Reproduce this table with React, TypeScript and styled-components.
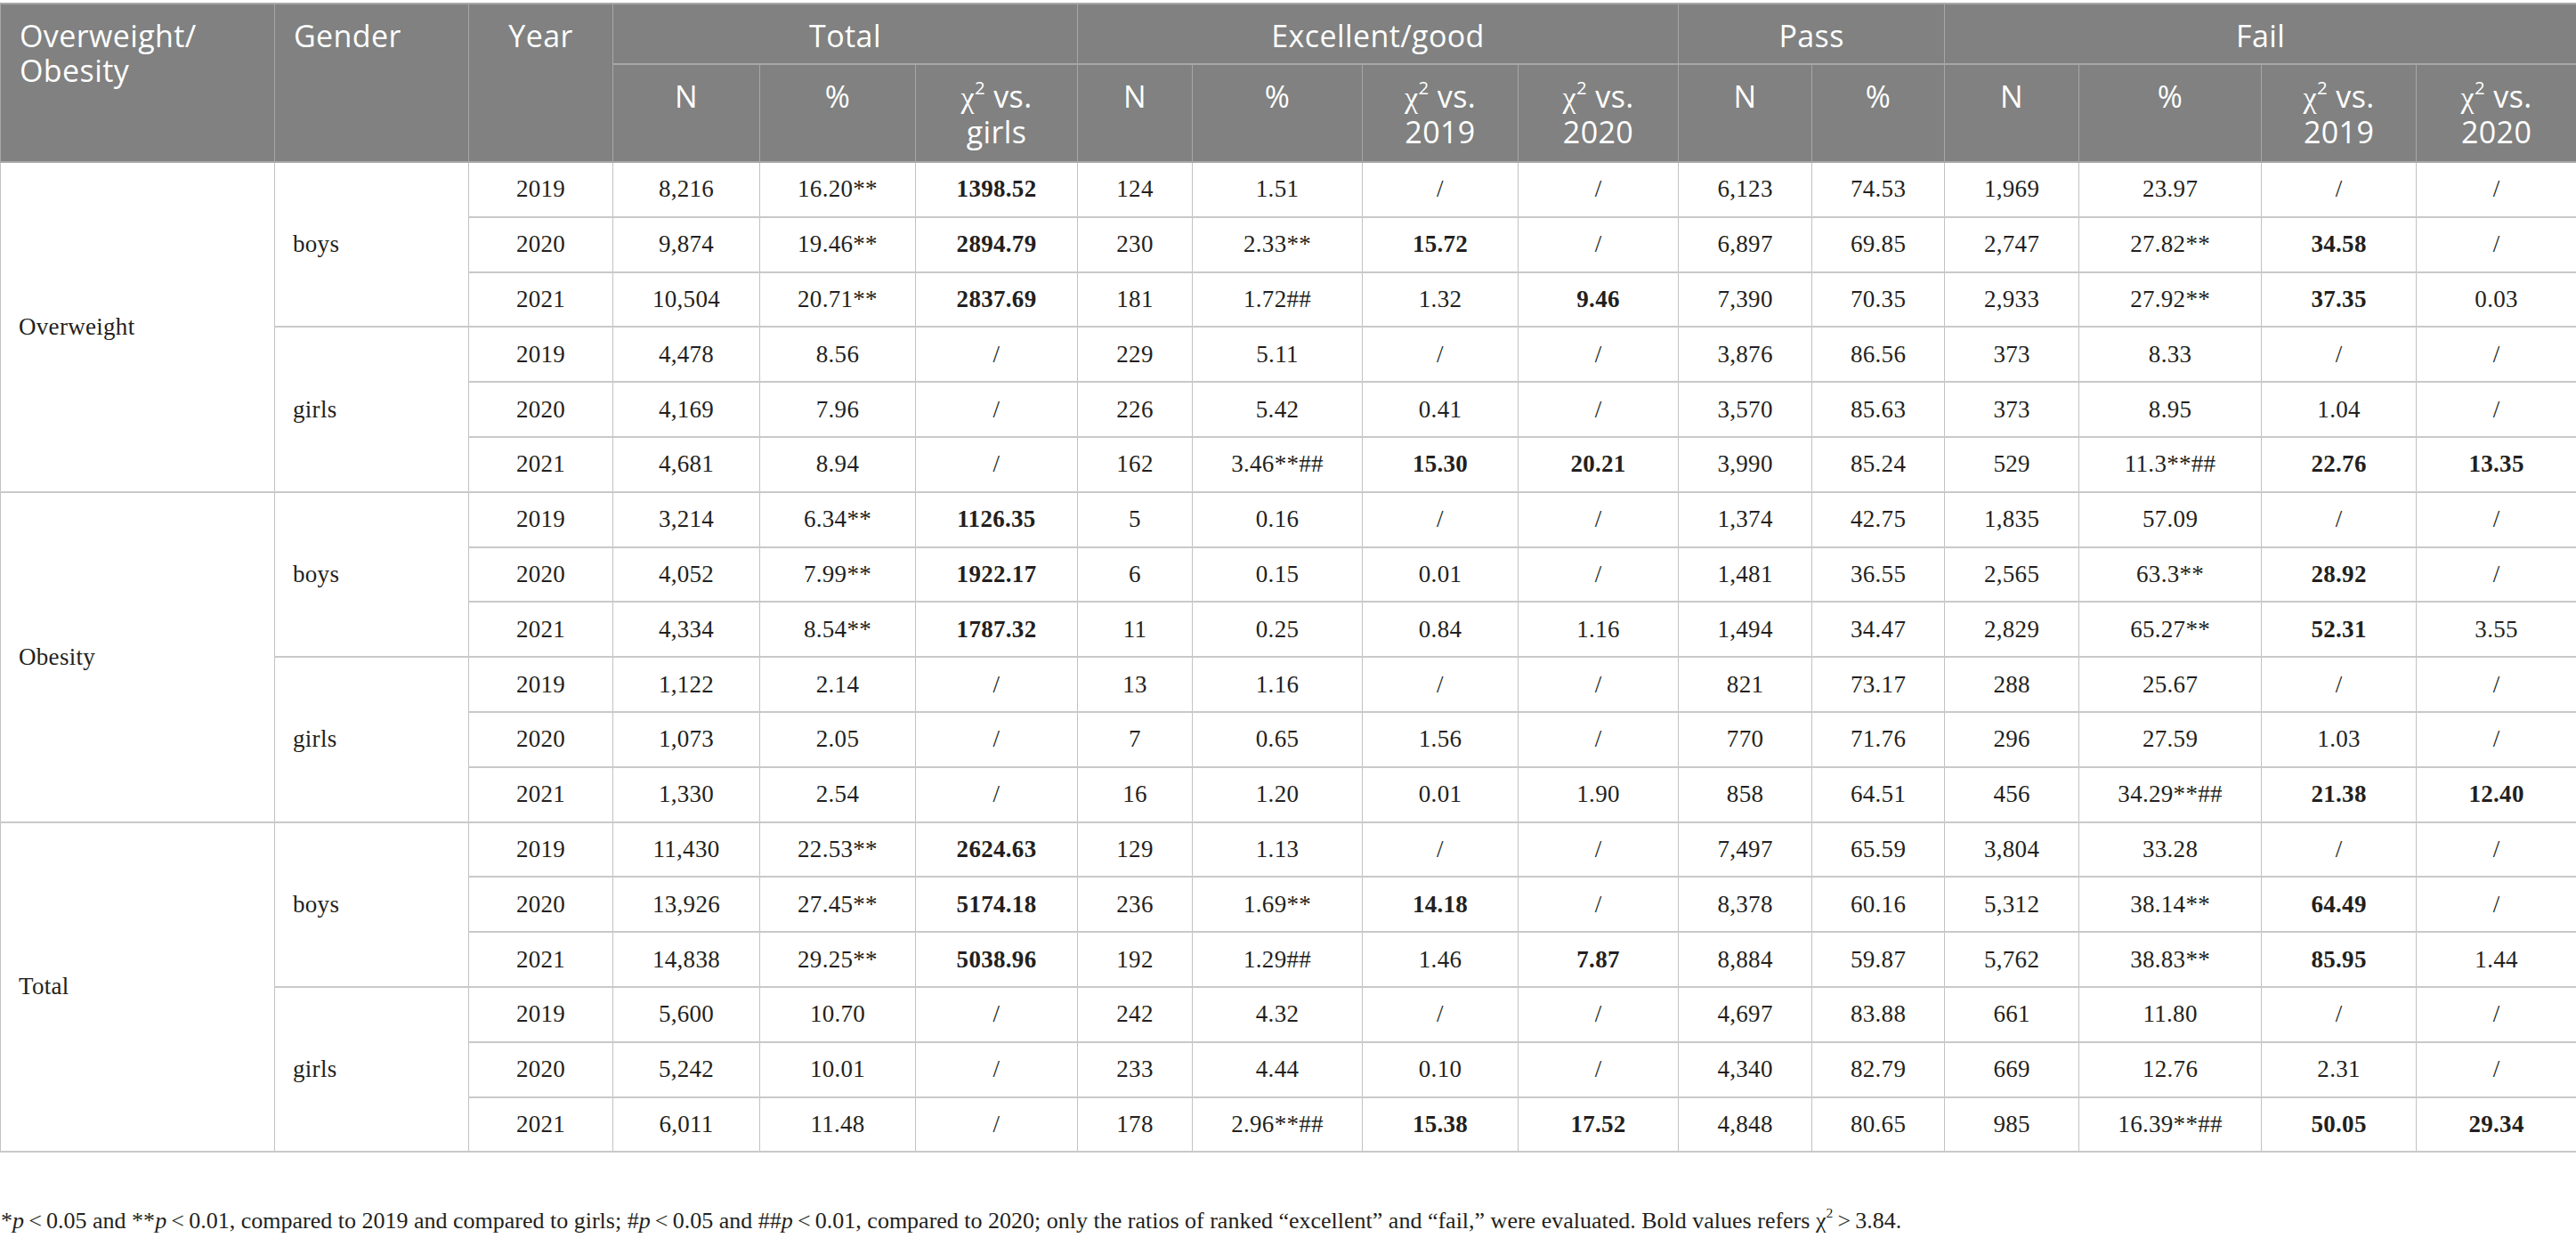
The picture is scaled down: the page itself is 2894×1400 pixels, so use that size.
import React from 'react';
import styled, { createGlobalStyle, css } from 'styled-components';

const GlobalStyle = createGlobalStyle`
  html, body {
    margin: 0;
    padding: 0;
    background: #fff;
  }

  body {
    overflow: hidden;
  }
`;

const Page = styled.div`
  width: 2894px;
  padding-top: 3px;
`;

const Table = styled.table`
  width: 2894px;
  table-layout: fixed;
  border-collapse: collapse;
  font-family: "Liberation Serif", "Times New Roman", serif;
  color: #231f20;
`;

interface RowProps {
  $h: number;
}

const Row = styled.tr<RowProps>`
  height: ${({ $h }) => $h}px;
`;

interface AlignProps {
  $left?: boolean;
}

const Th = styled.th<AlignProps>`
  background: #808180;
  color: #fff;
  font-family: "Open Sans", "Noto Sans", sans-serif;
  font-weight: 400;
  font-size: 34px;
  line-height: 39px;
  letter-spacing: 0.4px;
  text-align: ${({ $left }) => ($left ? 'left' : 'center')};
  vertical-align: top;
  padding: 16px ${({ $left }) => ($left ? '12px 0 21px' : '10px 0')};
  border: 1px solid #a6a7a6;
  border-top-width: 2px;
  border-bottom-width: 2px;
`;

interface TdProps extends AlignProps {
  $bold?: boolean;
}

const Td = styled.td<TdProps>`
  font-size: 27px;
  line-height: 31px;
  letter-spacing: 0.3px;
  text-align: ${({ $left }) => ($left ? 'left' : 'center')};
  vertical-align: middle;
  padding: ${({ $left }) => ($left ? '0 8px 0 20px' : '0 6px')};
  border-left: 1px solid #c2c2c2;
  border-right: 1px solid #c2c2c2;
  border-top: 2px solid #c9c9c9;
  border-bottom: 2px solid #c9c9c9;
  white-space: nowrap;

  ${({ $bold }) => $bold && css`
    font-weight: 700;
  `}
`;

const Chi = styled.span`
  font-family: "Liberation Serif", "DejaVu Serif", serif;
  font-size: 34px;
`;

const Sup = styled.sup`
  font-size: 0.6em;
  line-height: 0;
  vertical-align: 0.75em;
`;

const Note = styled.p`
  margin: 62px 0 0 1px;
  font-family: "Liberation Serif", "Times New Roman", serif;
  font-size: 26px;
  line-height: 30px;
  color: #231f20;
  white-space: nowrap;
`;

const widths = [308, 218, 162, 165, 175, 182, 129, 191, 175, 180, 150, 149, 151, 205, 174, 180];

type Cell = string | { bold: string };

const b = (v: string): Cell => ({ bold: v });

interface Gender {
  label: string;
  rows: [string, Cell[]][];
}

interface Group {
  label: string;
  genders: Gender[];
}

const data: Group[] = [
  {
    label: 'Overweight',
    genders: [
      {
        label: 'boys',
        rows: [
          ['2019', ['8,216', '16.20**', b('1398.52'), '124', '1.51', '/', '/', '6,123', '74.53', '1,969', '23.97', '/', '/']],
          ['2020', ['9,874', '19.46**', b('2894.79'), '230', '2.33**', b('15.72'), '/', '6,897', '69.85', '2,747', '27.82**', b('34.58'), '/']],
          ['2021', ['10,504', '20.71**', b('2837.69'), '181', '1.72##', '1.32', b('9.46'), '7,390', '70.35', '2,933', '27.92**', b('37.35'), '0.03']],
        ],
      },
      {
        label: 'girls',
        rows: [
          ['2019', ['4,478', '8.56', '/', '229', '5.11', '/', '/', '3,876', '86.56', '373', '8.33', '/', '/']],
          ['2020', ['4,169', '7.96', '/', '226', '5.42', '0.41', '/', '3,570', '85.63', '373', '8.95', '1.04', '/']],
          ['2021', ['4,681', '8.94', '/', '162', '3.46**##', b('15.30'), b('20.21'), '3,990', '85.24', '529', '11.3**##', b('22.76'), b('13.35')]],
        ],
      },
    ],
  },
  {
    label: 'Obesity',
    genders: [
      {
        label: 'boys',
        rows: [
          ['2019', ['3,214', '6.34**', b('1126.35'), '5', '0.16', '/', '/', '1,374', '42.75', '1,835', '57.09', '/', '/']],
          ['2020', ['4,052', '7.99**', b('1922.17'), '6', '0.15', '0.01', '/', '1,481', '36.55', '2,565', '63.3**', b('28.92'), '/']],
          ['2021', ['4,334', '8.54**', b('1787.32'), '11', '0.25', '0.84', '1.16', '1,494', '34.47', '2,829', '65.27**', b('52.31'), '3.55']],
        ],
      },
      {
        label: 'girls',
        rows: [
          ['2019', ['1,122', '2.14', '/', '13', '1.16', '/', '/', '821', '73.17', '288', '25.67', '/', '/']],
          ['2020', ['1,073', '2.05', '/', '7', '0.65', '1.56', '/', '770', '71.76', '296', '27.59', '1.03', '/']],
          ['2021', ['1,330', '2.54', '/', '16', '1.20', '0.01', '1.90', '858', '64.51', '456', '34.29**##', b('21.38'), b('12.40')]],
        ],
      },
    ],
  },
  {
    label: 'Total',
    genders: [
      {
        label: 'boys',
        rows: [
          ['2019', ['11,430', '22.53**', b('2624.63'), '129', '1.13', '/', '/', '7,497', '65.59', '3,804', '33.28', '/', '/']],
          ['2020', ['13,926', '27.45**', b('5174.18'), '236', '1.69**', b('14.18'), '/', '8,378', '60.16', '5,312', '38.14**', b('64.49'), '/']],
          ['2021', ['14,838', '29.25**', b('5038.96'), '192', '1.29##', '1.46', b('7.87'), '8,884', '59.87', '5,762', '38.83**', b('85.95'), '1.44']],
        ],
      },
      {
        label: 'girls',
        rows: [
          ['2019', ['5,600', '10.70', '/', '242', '4.32', '/', '/', '4,697', '83.88', '661', '11.80', '/', '/']],
          ['2020', ['5,242', '10.01', '/', '233', '4.44', '0.10', '/', '4,340', '82.79', '669', '12.76', '2.31', '/']],
          ['2021', ['6,011', '11.48', '/', '178', '2.96**##', b('15.38'), b('17.52'), '4,848', '80.65', '985', '16.39**##', b('50.05'), b('29.34')]],
        ],
      },
    ],
  },
];

function ChiVs({ against }: { against: string }): JSX.Element {
  return (
    <>
      <Chi>χ</Chi>
      <Sup>2</Sup>
      {' vs.'}
      <br />
      {against}
    </>
  );
}

function renderCell(cell: Cell, key: number): JSX.Element {
  if (typeof cell === 'string') {
    return <Td key={key}>{cell}</Td>;
  }
  return <Td key={key} $bold>{cell.bold}</Td>;
}

export default function App(): JSX.Element {
  const groupSpan = (g: Group) => g.genders.reduce((n, gd) => n + gd.rows.length, 0);

  return (
    <Page>
      <GlobalStyle />
      <Table>
        <colgroup>
          {widths.map((w, i) => <col key={i} style={{ width: w }} />)}
        </colgroup>
        <thead>
          <Row $h={68}>
            <Th $left rowSpan={2}>
              Overweight/
              <br />
              Obesity
            </Th>
            <Th $left rowSpan={2}>Gender</Th>
            <Th rowSpan={2}>Year</Th>
            <Th colSpan={3}>Total</Th>
            <Th colSpan={4}>Excellent/good</Th>
            <Th colSpan={2}>Pass</Th>
            <Th colSpan={4}>Fail</Th>
          </Row>
          <Row $h={110}>
            <Th>N</Th>
            <Th>%</Th>
            <Th><ChiVs against="girls" /></Th>
            <Th>N</Th>
            <Th>%</Th>
            <Th><ChiVs against="2019" /></Th>
            <Th><ChiVs against="2020" /></Th>
            <Th>N</Th>
            <Th>%</Th>
            <Th>N</Th>
            <Th>%</Th>
            <Th><ChiVs against="2019" /></Th>
            <Th><ChiVs against="2020" /></Th>
          </Row>
        </thead>
        <tbody>
          {data.map((group) => group.genders.map((gender, gi) => gender.rows.map(([year, cells], ri) => (
            <Row $h={61.8} key={`${group.label}-${gender.label}-${year}`}>
              {gi === 0 && ri === 0 && (
                <Td $left rowSpan={groupSpan(group)}>{group.label}</Td>
              )}
              {ri === 0 && (
                <Td $left rowSpan={gender.rows.length}>{gender.label}</Td>
              )}
              <Td>{year}</Td>
              {cells.map(renderCell)}
            </Row>
          ))))}
        </tbody>
      </Table>
      <Note>
        *
        <i>p</i>
        {'\u2009<\u20090.05 and **'}
        <i>p</i>
        {'\u2009<\u20090.01, compared to 2019 and compared to girls; #'}
        <i>p</i>
        {'\u2009<\u20090.05 and ##'}
        <i>p</i>
        {'\u2009<\u20090.01, compared to 2020; only the ratios of ranked “excellent” and “fail,” were evaluated. Bold values refers χ'}
        <Sup>2</Sup>
        {'\u2009>\u20093.84.'}
      </Note>
    </Page>
  );
}
